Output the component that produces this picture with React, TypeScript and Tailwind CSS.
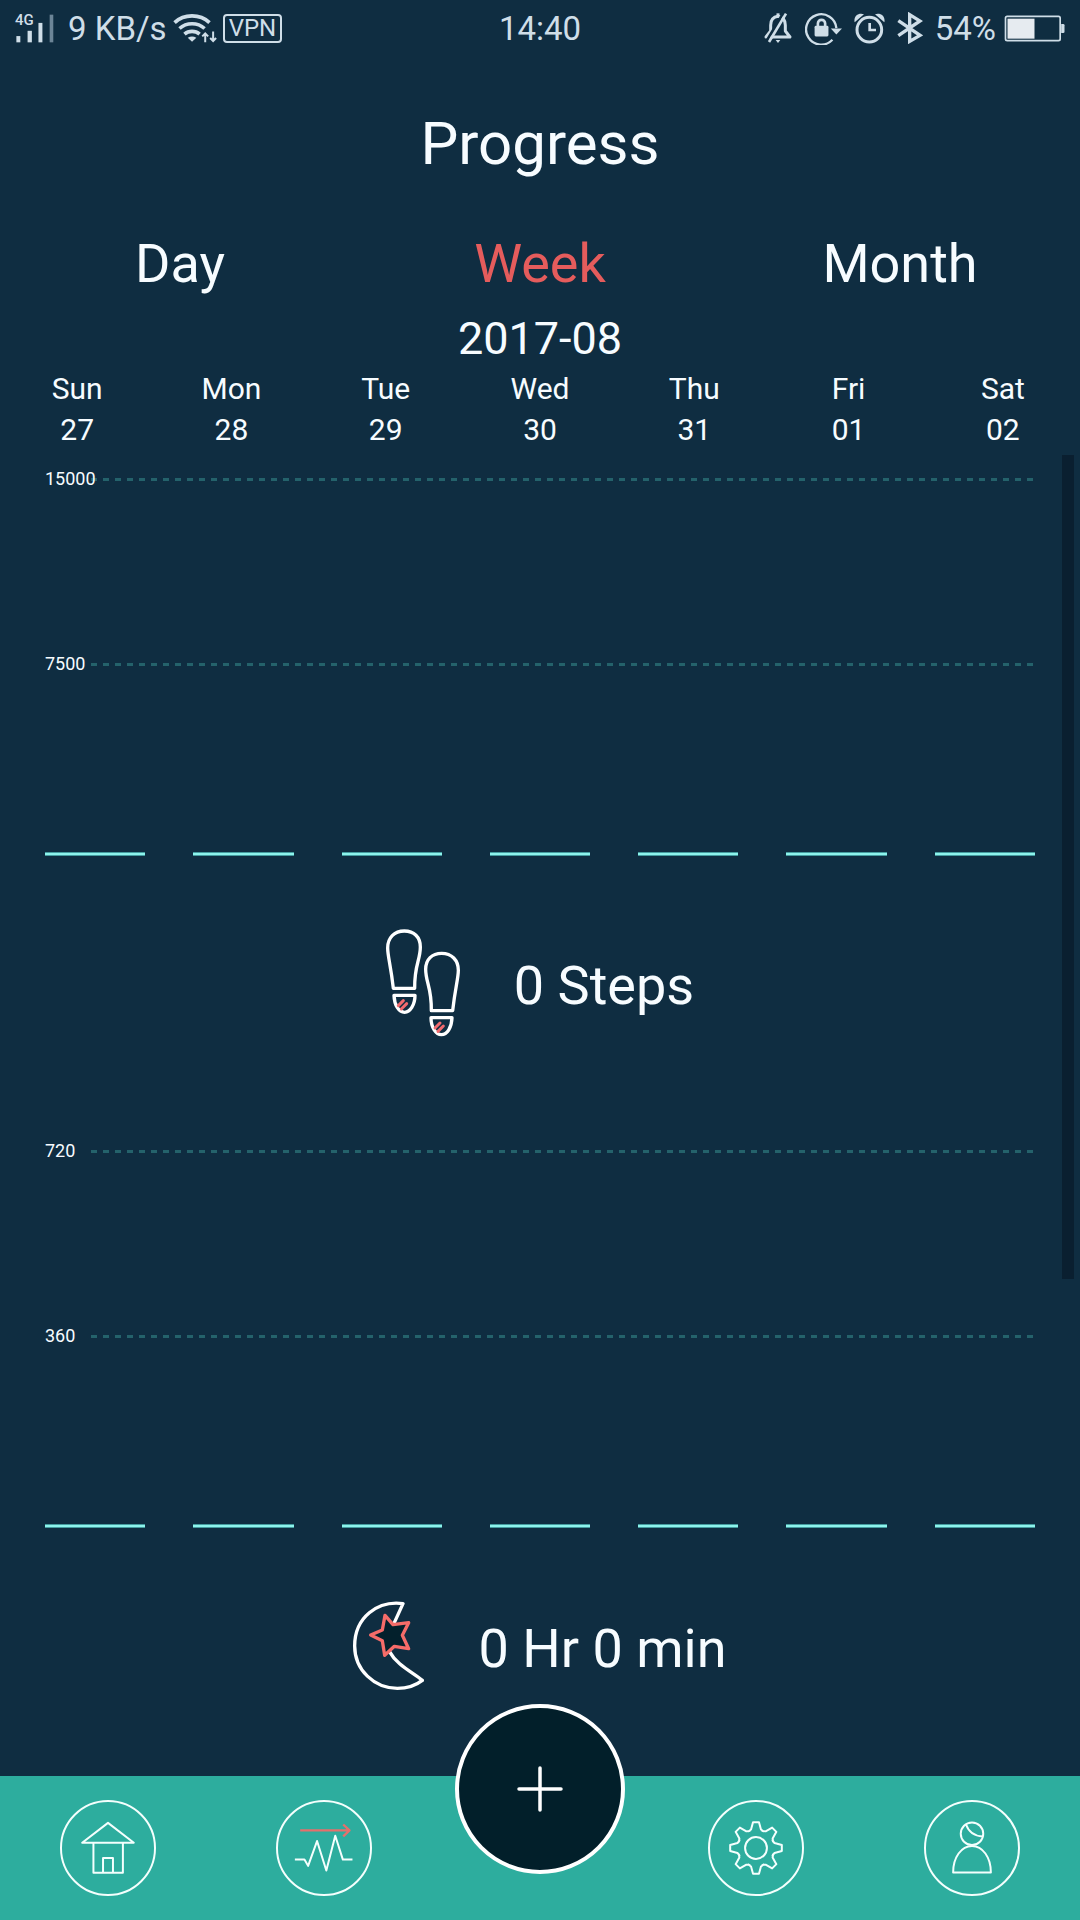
import React from "react";

const CREAM = "#cfdee8";

function StatusBar() {
  return (
    <header className="grid h-14 grid-cols-[1fr_auto_1fr] items-center px-[15px] text-[33px] leading-none text-[#cfdee8]">
      <div className="flex items-center">
        <span className="relative mr-3.5 block">
          <svg width="39" height="29" viewBox="46 37 118 88" fill={CREAM} aria-hidden="true">
            <rect x="50" y="104" width="12" height="19" />
            <rect x="84" y="88" width="13" height="35" />
            <rect x="117" y="64" width="12" height="59" />
            <rect x="151" y="39" width="11" height="84" fill="#6c8597" />
          </svg>
          <span className="absolute -top-0.5 left-0 text-[15px] font-medium leading-4">4G</span>
        </span>
        <span className="mr-1.5 whitespace-nowrap">9 KB/s</span>
        <svg className="mr-1.5" width="44" height="29" viewBox="522 37 132 88" fill="none" stroke={CREAM} strokeWidth="11" aria-hidden="true">
          <path d="M526 63 C555 36 603 36 632 63" />
          <path d="M541 81 C562 62 596 62 617 81" />
          <path d="M556 98 C569 87 589 87 602 98" />
          <path d="M566 109 Q579 101 592 109 L579 121Z" fill={CREAM} stroke="none" />
          <path d="M609 92 H660 V130 H609Z" fill="#0f2d41" stroke="none" />
          <path d="M619 123 V98 M610 105 L619 96 L628 105 M643 90 V116 M634 110 L643 119 L652 110" strokeWidth="6" />
        </svg>
        <span className="rounded-sm border-2 border-[#cfdee8] px-1 text-2xl leading-[25px]">VPN</span>
      </div>
      <time>14:40</time>
      <div className="flex items-center justify-end">
        <svg className="mr-3" width="29" height="32" viewBox="72 34 87 96" fill="none" stroke={CREAM} strokeWidth="9" strokeLinejoin="round" aria-hidden="true">
          <path d="M78 109 L92 91 V74 C92 58 100 49 114 47 C128 49 136 58 136 74 V91 L150 109Z" />
          <path d="M114 38 V48" />
          <path d="M79 122 L128 40" stroke="#0f2d41" strokeWidth="8" />
          <path d="M87 124 L138 39" strokeWidth="8" />
          <path d="M107 118 H121 L114 127Z" fill={CREAM} stroke="none" />
        </svg>
        <svg className="mr-3" width="37" height="33" viewBox="194 31 110 100" fill="none" stroke={CREAM} strokeWidth="7" aria-hidden="true">
          <path d="M276 115 A46 46 0 1 1 288 80" />
          <path d="M271 81 H305 L288 99Z" fill={CREAM} stroke="none" />
          <rect x="222" y="73" width="42" height="32" rx="4" fill={CREAM} stroke="none" />
          <path d="M232 74 V66 C232 51 254 51 254 66 V74" strokeWidth="8" />
        </svg>
        <svg className="mr-3" width="31" height="31" viewBox="339 36 93 93" fill="none" stroke={CREAM} strokeWidth="9" aria-hidden="true">
          <circle cx="385" cy="86" r="37" />
          <path d="M386 66 V87 H405" strokeWidth="8" />
          <path d="M341 64 C337 46 352 34 369 40Z M430 64 C434 46 419 34 402 40Z" fill={CREAM} stroke="none" />
        </svg>
        <svg className="mr-3" width="26" height="32" viewBox="466 34 78 96" fill="none" stroke={CREAM} strokeWidth="10" aria-hidden="true">
          <path d="M470 60 L535 104 L504 122 V42 L535 61 L470 105" />
        </svg>
        <span className="mr-2">54%</span>
        <svg width="61" height="27" viewBox="791 40 182 81" fill={CREAM} aria-hidden="true">
          <rect x="795" y="44" width="164" height="73" rx="5" fill="none" stroke={CREAM} strokeWidth="5" />
          <rect x="801" y="51" width="81" height="60" fill="#e6ebf0" />
          <path d="M962 67 H968 Q972 67 972 71 V90 Q972 94 968 94 H962Z" />
        </svg>
      </div>
    </header>
  );
}

const tabs = [
  { name: "Day", active: false },
  { name: "Week", active: true },
  { name: "Month", active: false },
];

const days = [
  ["Sun", "27"],
  ["Mon", "28"],
  ["Tue", "29"],
  ["Wed", "30"],
  ["Thu", "31"],
  ["Fri", "01"],
  ["Sat", "02"],
];

function GridLine({ label }: { label: string }) {
  return (
    <div className="flex items-center">
      <span className="relative w-[46px] text-lg leading-5">{label}</span>
      <span className="h-[3px] flex-1 bg-[repeating-linear-gradient(90deg,#24626b_0_6px,transparent_6px_12px)]" />
    </div>
  );
}

type ChartProps = { max: string; mid: string; total: string; icon: React.ReactNode };

function Chart({ max, mid, total, icon }: ChartProps) {
  return (
    <section className="px-[45px]">
      <GridLine label={max} />
      <div className="mt-[165px]">
        <GridLine label={mid} />
      </div>
      <div className="mt-[178px] grid grid-cols-7 gap-12">
        {days.map(([day]) => (
          <span key={day} className="h-1 border-y border-[#459c9f] bg-[#8df3ec]" />
        ))}
      </div>
      <div className="mt-[73px] flex items-center justify-center gap-[54px]">
        {icon}
        <span className="pt-1.5 text-[54px] leading-16">{total}</span>
      </div>
    </section>
  );
}

function Sole() {
  return (
    <>
      <path d="M133 64 C103 64 83 84 83 115 C83 140 92 165 100 236 H164 C163 165 181 152 181 112 C181 82 162 64 133 64Z" />
      <path d="M102 257 H165 C165 286 150 308 134 308 C116 308 103 286 102 257Z" />
    </>
  );
}

function StepsIcon() {
  return (
    <svg width="74" height="108" viewBox="78 58 222 324" fill="none" stroke="#fff" strokeWidth="10" strokeLinejoin="round" aria-hidden="true">
      <Sole />
      <g transform="translate(378 67) scale(-1 1)">
        <Sole />
      </g>
      <g stroke="#f26a6e" strokeWidth="9" strokeLinecap="round">
        <path d="M115 288 L130 273 M124 298 L140 282" />
        <path d="M225 355 L240 340 M234 365 L250 349" />
      </g>
    </svg>
  );
}

function SleepIcon() {
  return (
    <svg width="71" height="90" viewBox="72 63 213 270" fill="none" stroke="#fff" strokeWidth="10" strokeLinejoin="round" aria-hidden="true">
      <path d="M222 71 C146 61 77 112 77 198 C77 270 136 325 205 325 C235 325 262 315 280 301 C250 276 204 256 181 214 L196 128Z" />
      <path
        d="M168 106 L192 134 L239 128 L220 166 L239 206 L196 199 L167 226 L160 182 L125 165 L160 150Z"
        fill="#03202c"
        stroke="#f56c69"
      />
    </svg>
  );
}

function NavButton({ label, children }: { label: string; children: React.ReactNode }) {
  return (
    <button type="button" aria-label={label} className="justify-self-center rounded-full">
      <svg width="96" height="96" viewBox="-145 -145 290 290" fill="none" stroke="#f4fffd" strokeWidth="6" strokeLinejoin="round" aria-hidden="true">
        <circle r="142" />
        {children}
      </svg>
    </button>
  );
}

function gearPath() {
  const tooth = [
    [-23, -50],
    [-15, -56],
    [-9, -78],
    [9, -78],
    [15, -56],
    [23, -50],
  ];
  const points: string[] = [];
  for (let i = 0; i < 8; i++) {
    const a = (i * Math.PI) / 4;
    for (const [x, y] of tooth) {
      points.push(`${x * Math.cos(a) - y * Math.sin(a)} ${x * Math.sin(a) + y * Math.cos(a)}`);
    }
  }
  return `M${points.join(" L")}Z`;
}

function BottomNav() {
  return (
    <nav className="grid grid-cols-5 items-center bg-[#2dad9e] py-6">
      <NavButton label="Home">
        <path d="M-78 -16 L0 -76 L78 -16Z M-44 -16 V75 H45 V-16 M-15 75 V30 H15 V75" />
      </NavButton>
      <NavButton label="Progress">
        <path d="M-88 35 H-59 L-48 54 L-21 -21 L7 68 L34 -37 L57 35 H86" />
        <path d="M-72 -53 H76 M58 -71 L77 -53 L58 -35" stroke="#e5706c" strokeWidth="7" />
      </NavButton>
      <div className="relative self-stretch">
        <button
          type="button"
          aria-label="Add"
          className="absolute -top-24 left-1/2 flex size-[170px] -translate-x-1/2 items-center justify-center rounded-full border-4 border-white bg-[#021f2a]"
        >
          <svg width="46" height="46" viewBox="0 0 46 46" stroke="#fff" strokeWidth="3.5" strokeLinecap="round" aria-hidden="true">
            <path d="M23 2 V44 M2 23 H44" />
          </svg>
        </button>
      </div>
      <NavButton label="Settings">
        <path d={gearPath()} />
        <circle r="33" />
      </NavButton>
      <NavButton label="Profile">
        <circle cx="0" cy="-43" r="34" />
        <path d="M-18 -71 C-9 -46 8 -36 32 -35" />
        <path d="M-57 74 C-57 28 -32 -6 0 -6 C32 -6 57 28 57 74Z" />
      </NavButton>
    </nav>
  );
}

export default function App() {
  return (
    <div className="flex min-h-screen flex-col bg-[#0f2d41] font-['Roboto',sans-serif] text-[#f7fcff]">
      <StatusBar />
      <h1 className="mt-[52px] text-center text-6xl leading-[72px]">Progress</h1>
      <div role="tablist" className="mt-[52px] grid grid-cols-3 text-[54px] leading-16">
        {tabs.map((tab) => (
          <button
            key={tab.name}
            type="button"
            role="tab"
            aria-selected={tab.active}
            className={tab.active ? "text-[#e55c5c]" : ""}
          >
            {tab.name}
          </button>
        ))}
      </div>
      <p className="mt-3.5 text-center text-[45px] leading-[58px]">2017-08</p>
      <div className="grid grid-cols-7 text-center text-3xl leading-[41px]">
        {days.map(([day, date]) => (
          <div key={day}>
            <div>{day}</div>
            <div>{date}</div>
          </div>
        ))}
      </div>
      <main className="relative mt-[5px] flex flex-1 flex-col gap-[104px] pt-3.5 pb-20">
        <Chart max="15000" mid="7500" total="0 Steps" icon={<StepsIcon />} />
        <Chart max="720" mid="360" total="0 Hr 0 min" icon={<SleepIcon />} />
        <span className="absolute top-0 right-1.5 h-[62.4%] w-3 bg-[#0a1f30]" />
      </main>
      <BottomNav />
    </div>
  );
}
